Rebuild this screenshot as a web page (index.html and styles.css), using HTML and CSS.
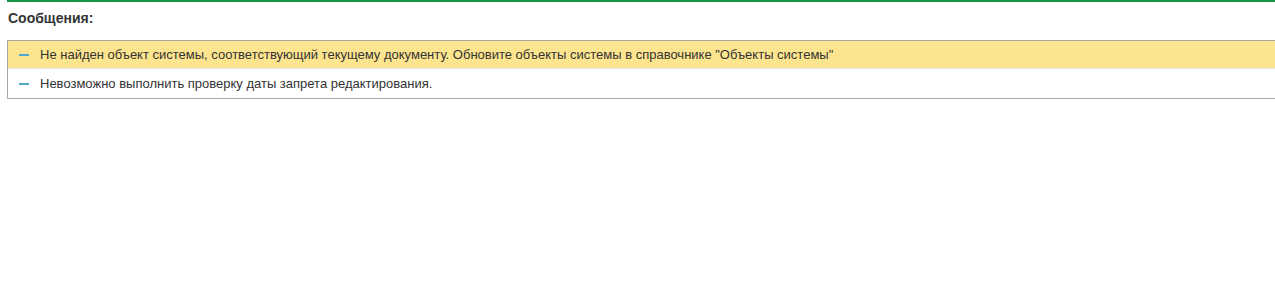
FILE: index.html
```html
<!DOCTYPE html>
<html lang="ru">
<head>
<meta charset="utf-8">
<link rel="stylesheet" href="styles.css">
</head>
<body>
<div class="page">
  <div class="topline"></div>
  <div class="title">Сообщения:</div>
  <div class="list">
    <div class="msg msg-active">
      <span class="dash"></span>
      <span class="text">Не найден объект системы, соответствующий текущему документу. Обновите объекты системы в справочнике "Объекты системы"</span>
    </div>
    <div class="msg">
      <span class="dash"></span>
      <span class="text">Невозможно выполнить проверку даты запрета редактирования.</span>
    </div>
  </div>
</div>
</body>
</html>
```
FILE: styles.css
```css
html, body { margin: 0; padding: 0; background: #fff; }
body { font-family: Arial, "Liberation Sans", sans-serif; color: #333; }
.page { padding-left: 7px; }
.topline { height: 2px; background: #139442; }
.title { font-weight: bold; font-size: 14px; line-height: 16px; padding: 8px 0 0 1px; color: #333; }
.list { border: 1px solid #a6a6a6; border-right: none; margin-top: 14px; }
.msg { display: flex; align-items: center; height: 27px; font-size: 13px; }
.msg + .msg { border-top: 1px solid #e6e6e6; height: 29px; }
.msg-active { background: #fde58f; }
.dash { width: 10px; height: 2px; background: #4fa9cc; margin-left: 11px; margin-right: 11px; flex: none; }
.text { white-space: nowrap; }
```
